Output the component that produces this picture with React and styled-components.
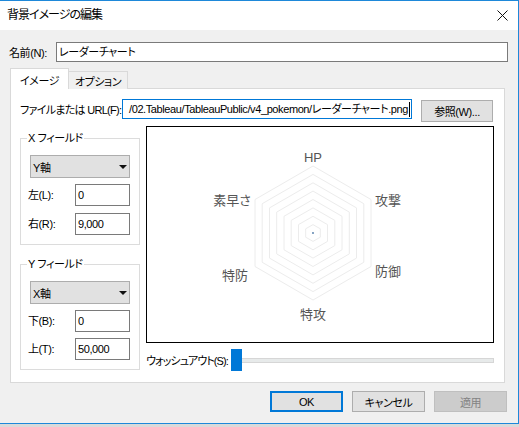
import React from 'react';
import styled, { createGlobalStyle } from 'styled-components';

const GlobalStyle = createGlobalStyle`
  html, body {
    margin: 0;
    padding: 0;
    background: #dadada;
  }
  body {
    font-family: "Liberation Sans", "Noto Sans CJK JP", sans-serif;
    font-size: 11px;
    letter-spacing: -0.4px;
    color: #000;
    font-feature-settings: "palt";
    white-space: nowrap;
  }
  * {
    box-sizing: border-box;
  }
`;

const AXES = [
  { label: 'HP', x: 166, y: 30 },
  { label: '攻撃', x: 241, y: 73 },
  { label: '防御', x: 241, y: 144 },
  { label: '特攻', x: 166, y: 187 },
  { label: '特防', x: 88, y: 148 },
  { label: '素早さ', x: 85, y: 73 },
];

function hexPoints(cx, cy, r) {
  return [0, 1, 2, 3, 4, 5]
    .map((i) => {
      const a = ((-90 + i * 60) * Math.PI) / 180;
      return `${(cx + r * Math.cos(a)).toFixed(1)},${(cy + r * Math.sin(a)).toFixed(1)}`;
    })
    .join(' ');
}

function RadarChart() {
  const rings = [1, 2, 3, 4, 5, 6, 7, 8];
  return (
    <svg width="346" height="215" viewBox="0 0 346 215">
      {rings.map((k) => (
        <polygon key={k} points={hexPoints(166, 106, (67 * k) / 8)} fill="none" stroke="#ececec" strokeWidth="1" />
      ))}
      <circle cx="166" cy="106" r="0.9" fill="#4e79a7" />
      {AXES.map((a) => (
        <AxisLabel key={a.label} x={a.x} y={a.y} textAnchor="middle" dominantBaseline="central">
          {a.label}
        </AxisLabel>
      ))}
    </svg>
  );
}

function CloseIcon() {
  return (
    <svg width="11" height="11" viewBox="0 0 11 11">
      <path d="M0.5 0.5 L10.5 10.5 M10.5 0.5 L0.5 10.5" stroke="#111" strokeWidth="1" fill="none" />
    </svg>
  );
}

export default function App() {
  return (
    <>
      <GlobalStyle />
      <Window>
        <TitleBar>
          <Title>背景イメージの編集</Title>
          <CloseIcon />
        </TitleBar>
        <Body>
          <NameRow>
            <NameLabel>名前(N):</NameLabel>
            <TextBox>レーダーチャート</TextBox>
          </NameRow>

          <TabStrip>
            <Tab $active>イメージ</Tab>
            <Tab>オプション</Tab>
          </TabStrip>

          <TabPanel>
            <FileRow>
              <FileLabel>ファイルまたは URL(F):</FileLabel>
              <PathBox>
                <span>/02.Tableau/TableauPublic/v4_pokemon/レーダーチャート.png</span>
                <Caret />
              </PathBox>
              <BrowseButton>参照(W)...</BrowseButton>
            </FileRow>

            <MainRow>
              <SideColumn>
                <Group>
                  <Legend>X フィールド</Legend>
                  <Select>
                    <span>Y軸</span>
                    <Arrow />
                  </Select>
                  <RangeRow>
                    <RangeLabel>左(L):</RangeLabel>
                    <NumberBox>0</NumberBox>
                  </RangeRow>
                  <RangeRow $gap={7}>
                    <RangeLabel>右(R):</RangeLabel>
                    <NumberBox>9,000</NumberBox>
                  </RangeRow>
                </Group>
                <Group>
                  <Legend>Y フィールド</Legend>
                  <Select>
                    <span>X軸</span>
                    <Arrow />
                  </Select>
                  <RangeRow>
                    <RangeLabel>下(B):</RangeLabel>
                    <NumberBox>0</NumberBox>
                  </RangeRow>
                  <RangeRow $gap={6}>
                    <RangeLabel>上(T):</RangeLabel>
                    <NumberBox>50,000</NumberBox>
                  </RangeRow>
                </Group>
              </SideColumn>

              <PreviewColumn>
                <Preview>
                  <RadarChart />
                </Preview>
                <WashoutRow>
                  <WashoutLabel>ウォッシュアウト(S):</WashoutLabel>
                  <Thumb />
                  <Track />
                </WashoutRow>
              </PreviewColumn>
            </MainRow>
          </TabPanel>

          <Footer>
            <DialogButton $variant="primary">OK</DialogButton>
            <DialogButton>キャンセル</DialogButton>
            <DialogButton $variant="disabled">適用</DialogButton>
          </Footer>
        </Body>
      </Window>
    </>
  );
}

const Window = styled.div`
  width: 519px;
  height: 424px;
  background: #f0f0f0;
  border-top: 1px solid #1e88d9;
  border-right: 1px solid #1e88d9;
  border-bottom: 1px solid #1e88d9;
  display: flex;
  flex-direction: column;
`;

const TitleBar = styled.div`
  height: 29px;
  background: #fff;
  display: flex;
  align-items: center;
  justify-content: space-between;
  padding: 0 10px 0 7px;
`;

const Title = styled.div`
  font-size: 12px;
  letter-spacing: -1px;
  line-height: 14px;
  padding-bottom: 1px;
`;

const Body = styled.div`
  flex: 1;
  display: flex;
  flex-direction: column;
  padding: 12px 10px 0 9px;
`;

const NameRow = styled.div`
  display: flex;
  align-items: center;
  height: 20px;
`;

const NameLabel = styled.div`
  width: 47px;
  line-height: 14px;
  padding-top: 1px;
`;

const TextBox = styled.div`
  flex: 1;
  height: 20px;
  border: 1px solid #7a7a7a;
  background: #fff;
  padding: 0 2px;
  line-height: 18px;
`;

const TabStrip = styled.div`
  margin-top: 6px;
  margin-bottom: -1px;
  height: 21px;
  padding-left: 1px;
  display: flex;
  align-items: flex-end;
  position: relative;
  z-index: 1;
`;

const Tab = styled.div`
  width: ${({ $active }) => ($active ? '59px' : '60px')};
  height: ${({ $active }) => ($active ? '21px' : '18px')};
  margin-left: ${({ $active }) => ($active ? '0' : '-1px')};
  padding-top: ${({ $active }) => ($active ? '5px' : '3px')};
  background: ${({ $active }) => ($active ? '#fff' : '#f0f0f0')};
  border: 1px solid #d9d9d9;
  border-bottom: 0;
  text-align: center;
  line-height: 14px;
`;

const TabPanel = styled.div`
  width: 495px;
  height: 295px;
  margin-left: 1px;
  background: #fff;
  border: 1px solid #d9d9d9;
  padding: 10px 10px 0 9px;
`;

const FileRow = styled.div`
  display: flex;
  align-items: flex-start;
  height: 22px;
`;

const FileLabel = styled.div`
  width: 102px;
  letter-spacing: -0.7px;
  line-height: 20px;
  padding-top: 1px;
`;

const PathBox = styled.div`
  width: 290px;
  height: 20px;
  border: 1px solid #0078d7;
  background: #fff;
  display: flex;
  align-items: center;
  justify-content: flex-end;
  padding-right: 1px;
  overflow: hidden;
  line-height: 18px;
`;

const Caret = styled.span`
  flex: none;
  width: 1px;
  height: 15px;
  margin-left: 1px;
  background: #000;
`;

const BrowseButton = styled.div`
  width: 72px;
  height: 22px;
  margin: 1px 1px 0 9px;
  background: #e1e1e1;
  border: 1px solid #adadad;
  display: flex;
  align-items: center;
  justify-content: center;
`;

const MainRow = styled.div`
  margin-top: 5px;
  display: flex;
  gap: 6px;
`;

const SideColumn = styled.div`
  width: 120px;
  padding-top: 5px;
  display: flex;
  flex-direction: column;
  gap: 12px;
`;

const Group = styled.fieldset`
  margin: 0;
  min-width: 0;
  padding: 0 9px 9px;
  border: 1px solid #dcdcdc;
`;

const Legend = styled.legend`
  margin-left: -3px;
  padding: 0 1px;
  line-height: 14px;
`;

const Select = styled.div`
  margin-top: 10px;
  height: 23px;
  background: #e1e1e1;
  border: 1px solid #adadad;
  display: flex;
  align-items: center;
  justify-content: space-between;
  padding: 0 2px 0 2px;
`;

const Arrow = styled.span`
  width: 0;
  height: 0;
  border-left: 4px solid transparent;
  border-right: 4px solid transparent;
  border-top: 4px solid #111;
`;

const RangeRow = styled.div`
  margin-top: ${({ $gap }) => ($gap ?? 6)}px;
  display: flex;
  align-items: center;
  justify-content: space-between;
`;

const RangeLabel = styled.div`
  margin-left: -2px;
  line-height: 14px;
`;

const NumberBox = styled.div`
  width: 55px;
  height: 22px;
  border: 1px solid #7a7a7a;
  background: #fff;
  padding-left: 2px;
  line-height: 20px;
`;

const PreviewColumn = styled.div`
  width: 348px;
  display: flex;
  flex-direction: column;
`;

const Preview = styled.div`
  height: 217px;
  border: 1px solid #000;
  background: #fff;
`;

const AxisLabel = styled.text`
  font-family: "Liberation Sans", "Noto Sans CJK JP", sans-serif;
  font-size: 13px;
  letter-spacing: 0;
  fill: #555;
`;

const WashoutRow = styled.div`
  margin-top: 6px;
  height: 22px;
  display: flex;
  align-items: center;
`;

const WashoutLabel = styled.div`
  width: 85px;
  letter-spacing: -0.9px;
  line-height: 14px;
  padding-top: 2px;
`;

const Thumb = styled.div`
  flex: none;
  width: 11px;
  height: 22px;
  background: #0078d7;
`;

const Track = styled.div`
  flex: 1;
  height: 5px;
  background: #e7eaea;
  border: 1px solid #d6d6d6;
  border-left: 0;
`;

const Footer = styled.div`
  margin-top: 8px;
  padding-right: 1px;
  display: flex;
  justify-content: flex-end;
  gap: 9px;
`;

const DialogButton = styled.div`
  width: 73px;
  height: 21px;
  display: flex;
  align-items: center;
  justify-content: center;
  background: ${({ $variant }) => ($variant === 'disabled' ? '#cccccc' : '#e1e1e1')};
  border: ${({ $variant }) =>
    $variant === 'primary' ? '2px solid #0078d7' : $variant === 'disabled' ? '1px solid #bfbfbf' : '1px solid #adadad'};
  color: ${({ $variant }) => ($variant === 'disabled' ? '#838383' : '#000')};
`;
